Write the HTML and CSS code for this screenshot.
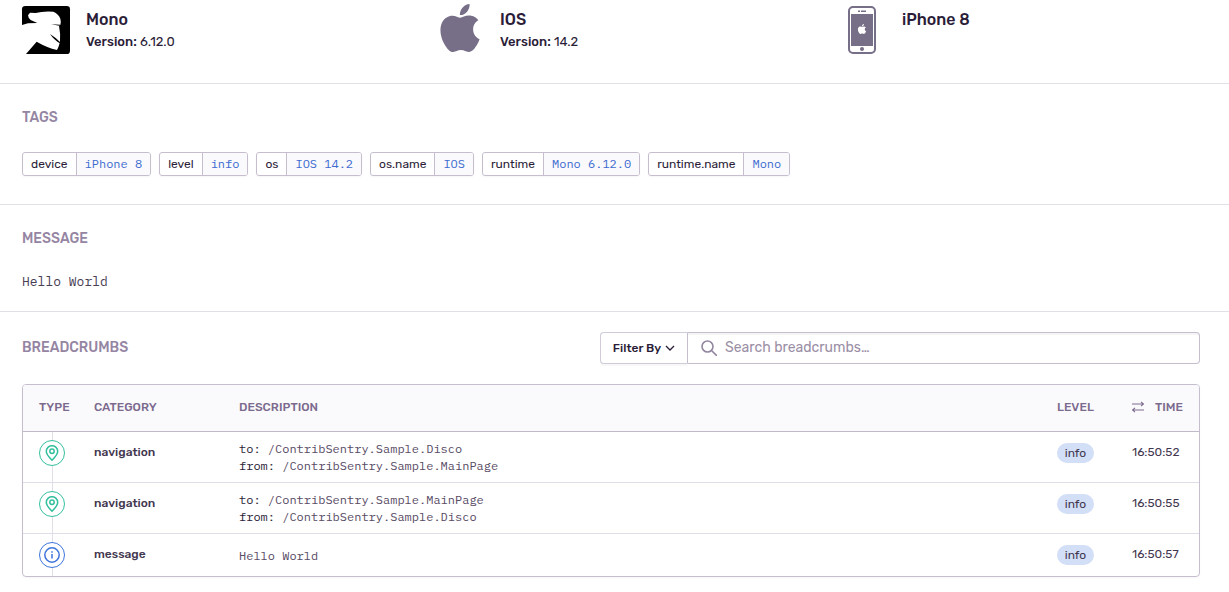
FILE: index.html
```html
<!DOCTYPE html>
<html lang="en">
<head>
<meta charset="utf-8">
<title>Event details</title>
<link rel="stylesheet" href="styles.css">
</head>
<body>
<svg class="sprite" aria-hidden="true">
  <symbol id="apple" viewBox="0 0 24 24"><path d="M12.152 6.896c-.948 0-2.415-1.078-3.96-1.04-2.04.027-3.91 1.183-4.961 3.014-2.117 3.675-.546 9.103 1.519 12.09 1.013 1.454 2.208 3.09 3.792 3.039 1.52-.065 2.09-.987 3.935-.987 1.831 0 2.35.987 3.96.948 1.637-.026 2.676-1.48 3.676-2.948 1.156-1.688 1.636-3.325 1.662-3.415-.039-.013-3.182-1.221-3.22-4.857-.026-3.04 2.48-4.494 2.597-4.559-1.429-2.09-3.623-2.324-4.39-2.376-2-.156-3.675 1.09-4.61 1.09zM15.53 3.83c.843-1.012 1.4-2.427 1.245-3.83-1.207.052-2.662.805-3.532 1.818-.78.896-1.454 2.338-1.273 3.714 1.338.104 2.715-.688 3.559-1.701"/></symbol>
  <symbol id="pin" viewBox="0 0 16 16"><path d="M8 15.2C5.400 12.700 2.300 9.600 2.300 6.300a5.700 5.600 0 0 1 11.400 0C13.700 9.600 10.600 12.700 8 15.200Z"/><circle cx="8" cy="6.200" r="2.200"/></symbol>
  <symbol id="info" viewBox="0 0 16 16"><circle cx="8" cy="8" r="7.200"/><path d="M8 7v4.500M8 4.200v1.500"/></symbol>
</svg>

<section class="section contexts">
  <div class="context">
    <svg class="context-icon" viewBox="0 0 144 144" aria-hidden="true">
      <rect width="144" height="144" rx="10"/>
      <path fill="#fff" d="M0 57 18 52 46 51 26 42 Q18 35 18 28 L24 20 41 21 Q62 15 94 17 Q110 24 115 38 Q118 49 115 57 L111 59 Q116 83 114 108 Q110 123 105 132 Q75 125 44 107 L12 144H0Z"/>
      <path d="M84 84Q100 94 114 108V112Q97 103 84 84ZM87 55 115 56 112 59Z"/>
    </svg>
    <div class="context-text"><h3 class="context-name">Mono</h3><p class="context-version"><strong>Version:</strong> 6.12.0</p></div>
  </div>
  <div class="context">
    <svg class="context-icon muted" viewBox="0 1 24 24" aria-hidden="true"><use href="#apple" width="24" height="24"/></svg>
    <div class="context-text"><h3 class="context-name">IOS</h3><p class="context-version"><strong>Version:</strong> 14.2</p></div>
  </div>
  <div class="context">
    <svg class="context-icon muted" viewBox="0 0 48 48" aria-hidden="true">
      <rect x="11" y="1" width="26" height="46" rx="4" fill="none" stroke="currentColor" stroke-width="2"/>
      <path d="M13 8h22v32H13zM20 4.500h2v1.500h-2zM23 4.500h5v1.500h-5z"/>
      <circle cx="24" cy="43" r="2"/>
      <use class="white" href="#apple" x="19" y="18" width="10" height="10"/>
    </svg>
    <div class="context-text"><h3 class="context-name">iPhone 8</h3></div>
  </div>
</section>

<section class="section tags-section">
  <h2 class="title">TAGS</h2>
  <ul class="tags">
    <li class="tag"><span class="key">device</span><a class="value" href="#">iPhone 8</a></li>
    <li class="tag"><span class="key">level</span><a class="value" href="#">info</a></li>
    <li class="tag"><span class="key">os</span><a class="value" href="#">IOS 14.2</a></li>
    <li class="tag"><span class="key">os.name</span><a class="value" href="#">IOS</a></li>
    <li class="tag"><span class="key">runtime</span><a class="value" href="#">Mono 6.12.0</a></li>
    <li class="tag"><span class="key">runtime.name</span><a class="value" href="#">Mono</a></li>
  </ul>
</section>

<section class="section message-section">
  <h2 class="title">MESSAGE</h2>
  <p class="message">Hello World</p>
</section>

<section class="breadcrumbs">
  <div class="toolbar">
    <h2 class="title">BREADCRUMBS</h2>
    <div class="controls">
      <button class="filter" type="button">Filter By
        <svg class="chevron" viewBox="0 0 10 10" aria-hidden="true"><path d="M1 3l4 4 4-4"/></svg>
      </button>
      <label class="search">
        <svg class="search-icon" viewBox="0 0 16 16" aria-hidden="true"><circle cx="6.500" cy="6.500" r="5.500"/><path d="M10.500 10.500 15.500 15.500"/></svg>
        <input class="search-input" type="text" placeholder="Search breadcrumbs…" aria-label="Search breadcrumbs">
      </label>
    </div>
  </div>
  <div class="panel">
    <table class="crumbs">
      <thead>
        <tr>
          <th class="col-type">TYPE</th><th class="col-category">CATEGORY</th><th>DESCRIPTION</th><th class="col-level">LEVEL</th>
          <th class="col-time"><span class="time-head"><svg class="swap" viewBox="0 0 12 12" aria-hidden="true"><path d="M0 3h11.500M9 .8 11.500 3 9 5.200M12 9H.5M3 6.800.5 9 3 11.200"/></svg>TIME</span></th>
        </tr>
      </thead>
      <tbody>
        <tr>
          <td class="type"><span class="badge green"><svg class="badge-icon" aria-hidden="true"><use href="#pin"/></svg></span></td>
          <td class="category">navigation</td>
          <td class="description"><b>to:</b> /ContribSentry.Sample.Disco<br><b>from:</b> /ContribSentry.Sample.MainPage</td>
          <td class="level"><span class="pill">info</span></td>
          <td class="time">16:50:52</td>
        </tr>
        <tr>
          <td class="type"><span class="badge green"><svg class="badge-icon" aria-hidden="true"><use href="#pin"/></svg></span></td>
          <td class="category">navigation</td>
          <td class="description"><b>to:</b> /ContribSentry.Sample.MainPage<br><b>from:</b> /ContribSentry.Sample.Disco</td>
          <td class="level"><span class="pill">info</span></td>
          <td class="time">16:50:55</td>
        </tr>
        <tr>
          <td class="type"><span class="badge blue"><svg class="badge-icon" aria-hidden="true"><use href="#info"/></svg></span></td>
          <td class="category">message</td>
          <td class="description">Hello World</td>
          <td class="level"><span class="pill">info</span></td>
          <td class="time">16:50:57</td>
        </tr>
      </tbody>
    </table>
  </div>
</section>
</body>
</html>
```
FILE: styles.css
```css
* { box-sizing: border-box; }
body {
  margin: 0;
  background: #fff;
  color: #2b1d38;
  font: 12px/18px Rubik, Roboto, sans-serif;
}
h2, h3, p, ul { margin: 0; padding: 0; }
.sprite { position: absolute; width: 0; height: 0; }
.section { border-bottom: 1px solid #e2e0e6; padding: 24px 29px 28px 22px; }
.title { font-size: 14px; line-height: 20px; font-weight: 500; color: #9585a3; }

.contexts {
  display: grid;
  grid-template-columns: 414fr 402fr 391fr;
  padding: 6px 0 29px 22px;
}
.context { display: flex; gap: 16px; }
.context-icon { width: 48px; height: 48px; flex: none; overflow: visible; }
.muted { color: #776e87; fill: currentColor; }
.white { fill: #fff; }
.context-text { padding-top: 1px; }
.context-name { font-size: 16px; line-height: 26px; font-weight: 500; }
.context-version { font-size: 13px; }
.context-version strong { font-weight: 500; }

.tags { display: flex; flex-wrap: wrap; gap: 8px; margin-top: 24px; list-style: none; }
.tag {
  display: flex;
  height: 24px;
  border: 1px solid #c6becf;
  border-radius: 3px;
  box-shadow: 0 1px 2px #0000000a;
  line-height: 22px;
  overflow: hidden;
}
.key { padding: 0 8px; }
.value {
  padding: 0 8px;
  border-left: 1px solid #c6becf;
  background: #fafafc;
  color: #3d6bd0;
  font: 12px/22px "IBM Plex Mono", "Liberation Mono", monospace;
  text-decoration: none;
}

.message-section { padding-bottom: 20px; }
.message { margin-top: 24px; color: #493e54; font: 13px/18px "IBM Plex Mono", "Liberation Mono", monospace; }

.breadcrumbs { padding: 20px 29px 16px 22px; }
.toolbar { display: flex; align-items: center; justify-content: space-between; margin-bottom: 20px; }
.controls { display: flex; width: 600px; height: 32px; }
.filter {
  display: flex;
  align-items: center;
  justify-content: center;
  gap: 4px;
  width: 88px;
  padding: 0;
  border: 1px solid #d1cad8;
  border-right-color: #c6becf;
  border-radius: 4px 0 0 4px;
  background: #fff;
  box-shadow: 0 2px 1px #00000008;
  color: #2b1d38;
  font: 500 12px/16px Rubik, Roboto, sans-serif;
}
.chevron { width: 10px; height: 10px; fill: none; stroke: currentColor; stroke-width: 1.3; }
.search {
  display: flex;
  flex: 1;
  align-items: center;
  gap: 8px;
  padding: 0 13px;
  border: 1px solid #c6becf;
  border-left: 0;
  border-radius: 0 4px 4px 0;
  box-shadow: inset 0 2px 0 #0000000a;
}
.search-icon { width: 16px; height: 16px; flex: none; fill: none; stroke: #9386a0; stroke-width: 1.6; stroke-linecap: round; }
.search-input { flex: 1; min-width: 0; padding: 0; border: 0; outline: 0; background: none; font: 14px/20px Rubik, Roboto, sans-serif; color: #2b1d38; }
.search-input::placeholder { color: #9b8fa6; opacity: 1; }

.panel { border: 1px solid #c6becf; border-radius: 4px; box-shadow: 0 1px 2px #0000000a; overflow: hidden; }
.crumbs { width: 100%; table-layout: fixed; border-collapse: separate; border-spacing: 0; }
th {
  height: 47px;
  padding: 0 0 3px 16px;
  background: #fafafc;
  border-bottom: 1px solid #c0bac8;
  color: #7c6a8e;
  font-weight: 500;
  text-align: left;
}
.col-type { width: 55px; }
.col-category { width: 145px; }
.col-level { width: 75px; }
.col-time { width: 83px; }
.time-head { display: flex; align-items: center; gap: 11px; }
.swap { width: 12px; height: 12px; fill: none; stroke: currentColor; stroke-width: 1.1; }
td { padding: 8px 0 8px 16px; border-bottom: 1px solid #e2dee8; color: #433750; vertical-align: top; }
tbody tr:last-child td { border-bottom: 0; }
.type { background: linear-gradient(#e2dee8, #e2dee8) 29px 0 / 1px 100% no-repeat; }
.badge {
  display: grid;
  place-items: center;
  width: 26px;
  height: 26px;
  border: 1px solid;
  border-radius: 50%;
  background: #fff;
}
.badge-icon { width: 16px; height: 16px; fill: none; stroke: currentColor; stroke-width: 1.5; }
.green { color: #33bf9e; }
.blue { color: #3d74db; }
.category, .time { line-height: 24px; }
.category { font-weight: 500; }
.description { vertical-align: middle; color: #584b65; font: 12px/17px "IBM Plex Mono", "Liberation Mono", monospace; }
.description b { font-weight: 400; color: #2b1d38; }
.level { padding-top: 11px; }
.pill { display: block; width: 37px; border-radius: 10px; background: #d2dff7; line-height: 20px; text-align: center; }
```
